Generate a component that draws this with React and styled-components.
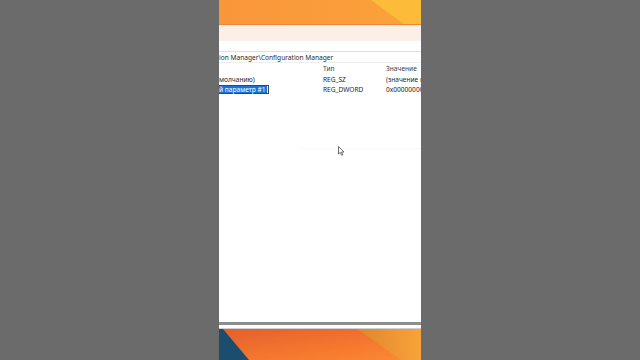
import styled, { createGlobalStyle } from "styled-components";

const GlobalStyle = createGlobalStyle`
  html, body {
    margin: 0;
    padding: 0;
    background: #6b6b6b;
    overflow: hidden;
  }
`;

// --- Layout ---
const Page = styled.main`
  width: 640px;
  height: 360px;
  display: flex;
  justify-content: center;
  font-family: "Noto Sans", "DejaVu Sans", sans-serif;
`;

const Strip = styled.div`
  width: 202px;
  height: 360px;
  display: flex;
  flex-direction: column;
  background: #ffffff;
  overflow: hidden;
`;

const Band = styled.div`
  height: ${({ h }) => h}px;
  flex: none;
  display: flex;
  svg {
    display: block;
    width: 100%;
    height: 100%;
  }
`;

const Peach = styled.div`
  height: 15px;
  flex: none;
  background: #fcefe8;
  border-top: 1px solid #f3e2d8;
`;

const Spacer = styled.div`
  height: 10px;
  flex: none;
  background: #fff;
`;

const AddressBar = styled.div`
  height: 10px;
  flex: none;
  display: flex;
  align-items: center;
  border-top: 1px solid #dedede;
  border-bottom: 1px solid #eeeeee;
  font-size: 6.6px;
  color: #2a2a2a;
  white-space: nowrap;
  overflow: hidden;
`;

const List = styled.div`
  flex: 1;
  position: relative;
  display: flex;
  flex-direction: column;
`;

const Row = styled.div`
  display: grid;
  grid-template-columns: 104px 63px 1fr;
  height: ${({ head }) => (head ? 11 : 10)}px;
  align-items: center;
  font-size: 6.6px;
  color: ${({ head }) => (head ? "#3a3a3a" : "#262626")};
  white-space: nowrap;
`;

const Cell = styled.div`
  overflow: hidden;
  display: flex;
  align-items: center;
`;

const EditBox = styled.div`
  display: flex;
  align-items: center;
  height: 9px;
  width: 50px;
  border: 1px solid #444;
  border-left: none;
  box-sizing: border-box;
  background: #fff;
`;

const Selected = styled.span`
  background: #1a73d9;
  color: #fff;
  height: 100%;
  display: flex;
  align-items: center;
  padding-right: 1px;
`;

const FaintLine = styled.div`
  position: absolute;
  left: 80px;
  right: 0;
  top: 85px;
  height: 1px;
  background: #f8f8f8;
`;

const Cursor = styled.svg`
  position: absolute;
  left: 119px;
  top: 83px;
  width: 7px;
  height: 10px;
`;

const Divider = styled.div`
  height: 3px;
  flex: none;
  background: #8d8d8d;
`;

const Gap = styled.div`
  height: 3px;
  flex: none;
  background: #fff;
  border-bottom: 1px solid #d0d0d0;
`;

export default function App() {
  return (
    <>
      <GlobalStyle />
      <Page>
        <Strip>
          <Band h={25}>
            <svg viewBox="0 0 202 25" preserveAspectRatio="none">
              <defs>
                <linearGradient id="tg" x1="0" y1="0" x2="1" y2="0">
                  <stop offset="0" stopColor="#f9963a" />
                  <stop offset="1" stopColor="#fba23a" />
                </linearGradient>
              </defs>
              <rect width="202" height="25" fill="url(#tg)" />
              <polygon points="152,0 202,0 202,25 186,25" fill="#fcbb38" />
              <rect y="24" width="202" height="1" fill="#e8883a" />
            </svg>
          </Band>
          <Peach />
          <Spacer />
          <AddressBar>ion Manager\Configuration Manager</AddressBar>
          <List>
            <Row head>
              <Cell />
              <Cell>Тип</Cell>
              <Cell>Значение</Cell>
            </Row>
            <Row>
              <Cell>молчанию)</Cell>
              <Cell>REG_SZ</Cell>
              <Cell>(значение не присвоено)</Cell>
            </Row>
            <Row>
              <Cell>
                <EditBox>
                  <Selected>й параметр #1</Selected>
                </EditBox>
              </Cell>
              <Cell>REG_DWORD</Cell>
              <Cell>0x00000000 (0)</Cell>
            </Row>
            <FaintLine />
            <Cursor viewBox="0 0 7 10">
              <path
                d="M0.5 0.5 L0.5 8 L2.3 6.4 L3.6 9.3 L4.8 8.8 L3.6 6 L6 6 Z"
                fill="#fff"
                stroke="#333"
                strokeWidth="0.7"
                strokeLinejoin="round"
              />
            </Cursor>
          </List>
          <Divider />
          <Gap />
          <Band h={31}>
            <svg viewBox="0 0 202 31" preserveAspectRatio="none">
              <defs>
                <linearGradient id="bg" x1="0" y1="0" x2="1" y2="1">
                  <stop offset="0" stopColor="#e35f2c" />
                  <stop offset="0.6" stopColor="#f6782f" />
                  <stop offset="1" stopColor="#f98c34" />
                </linearGradient>
                <linearGradient id="bl" x1="0" y1="0" x2="1" y2="0">
                  <stop offset="0" stopColor="#e0852e" />
                  <stop offset="1" stopColor="#f8a33a" />
                </linearGradient>
              </defs>
              <rect width="202" height="31" fill="url(#bg)" />
              <polygon points="138,0 202,0 202,31 182,31" fill="url(#bl)" />
              <polygon points="0,0 4,0 30,31 0,31" fill="#1b4e6e" />
            </svg>
          </Band>
        </Strip>
      </Page>
    </>
  );
}
